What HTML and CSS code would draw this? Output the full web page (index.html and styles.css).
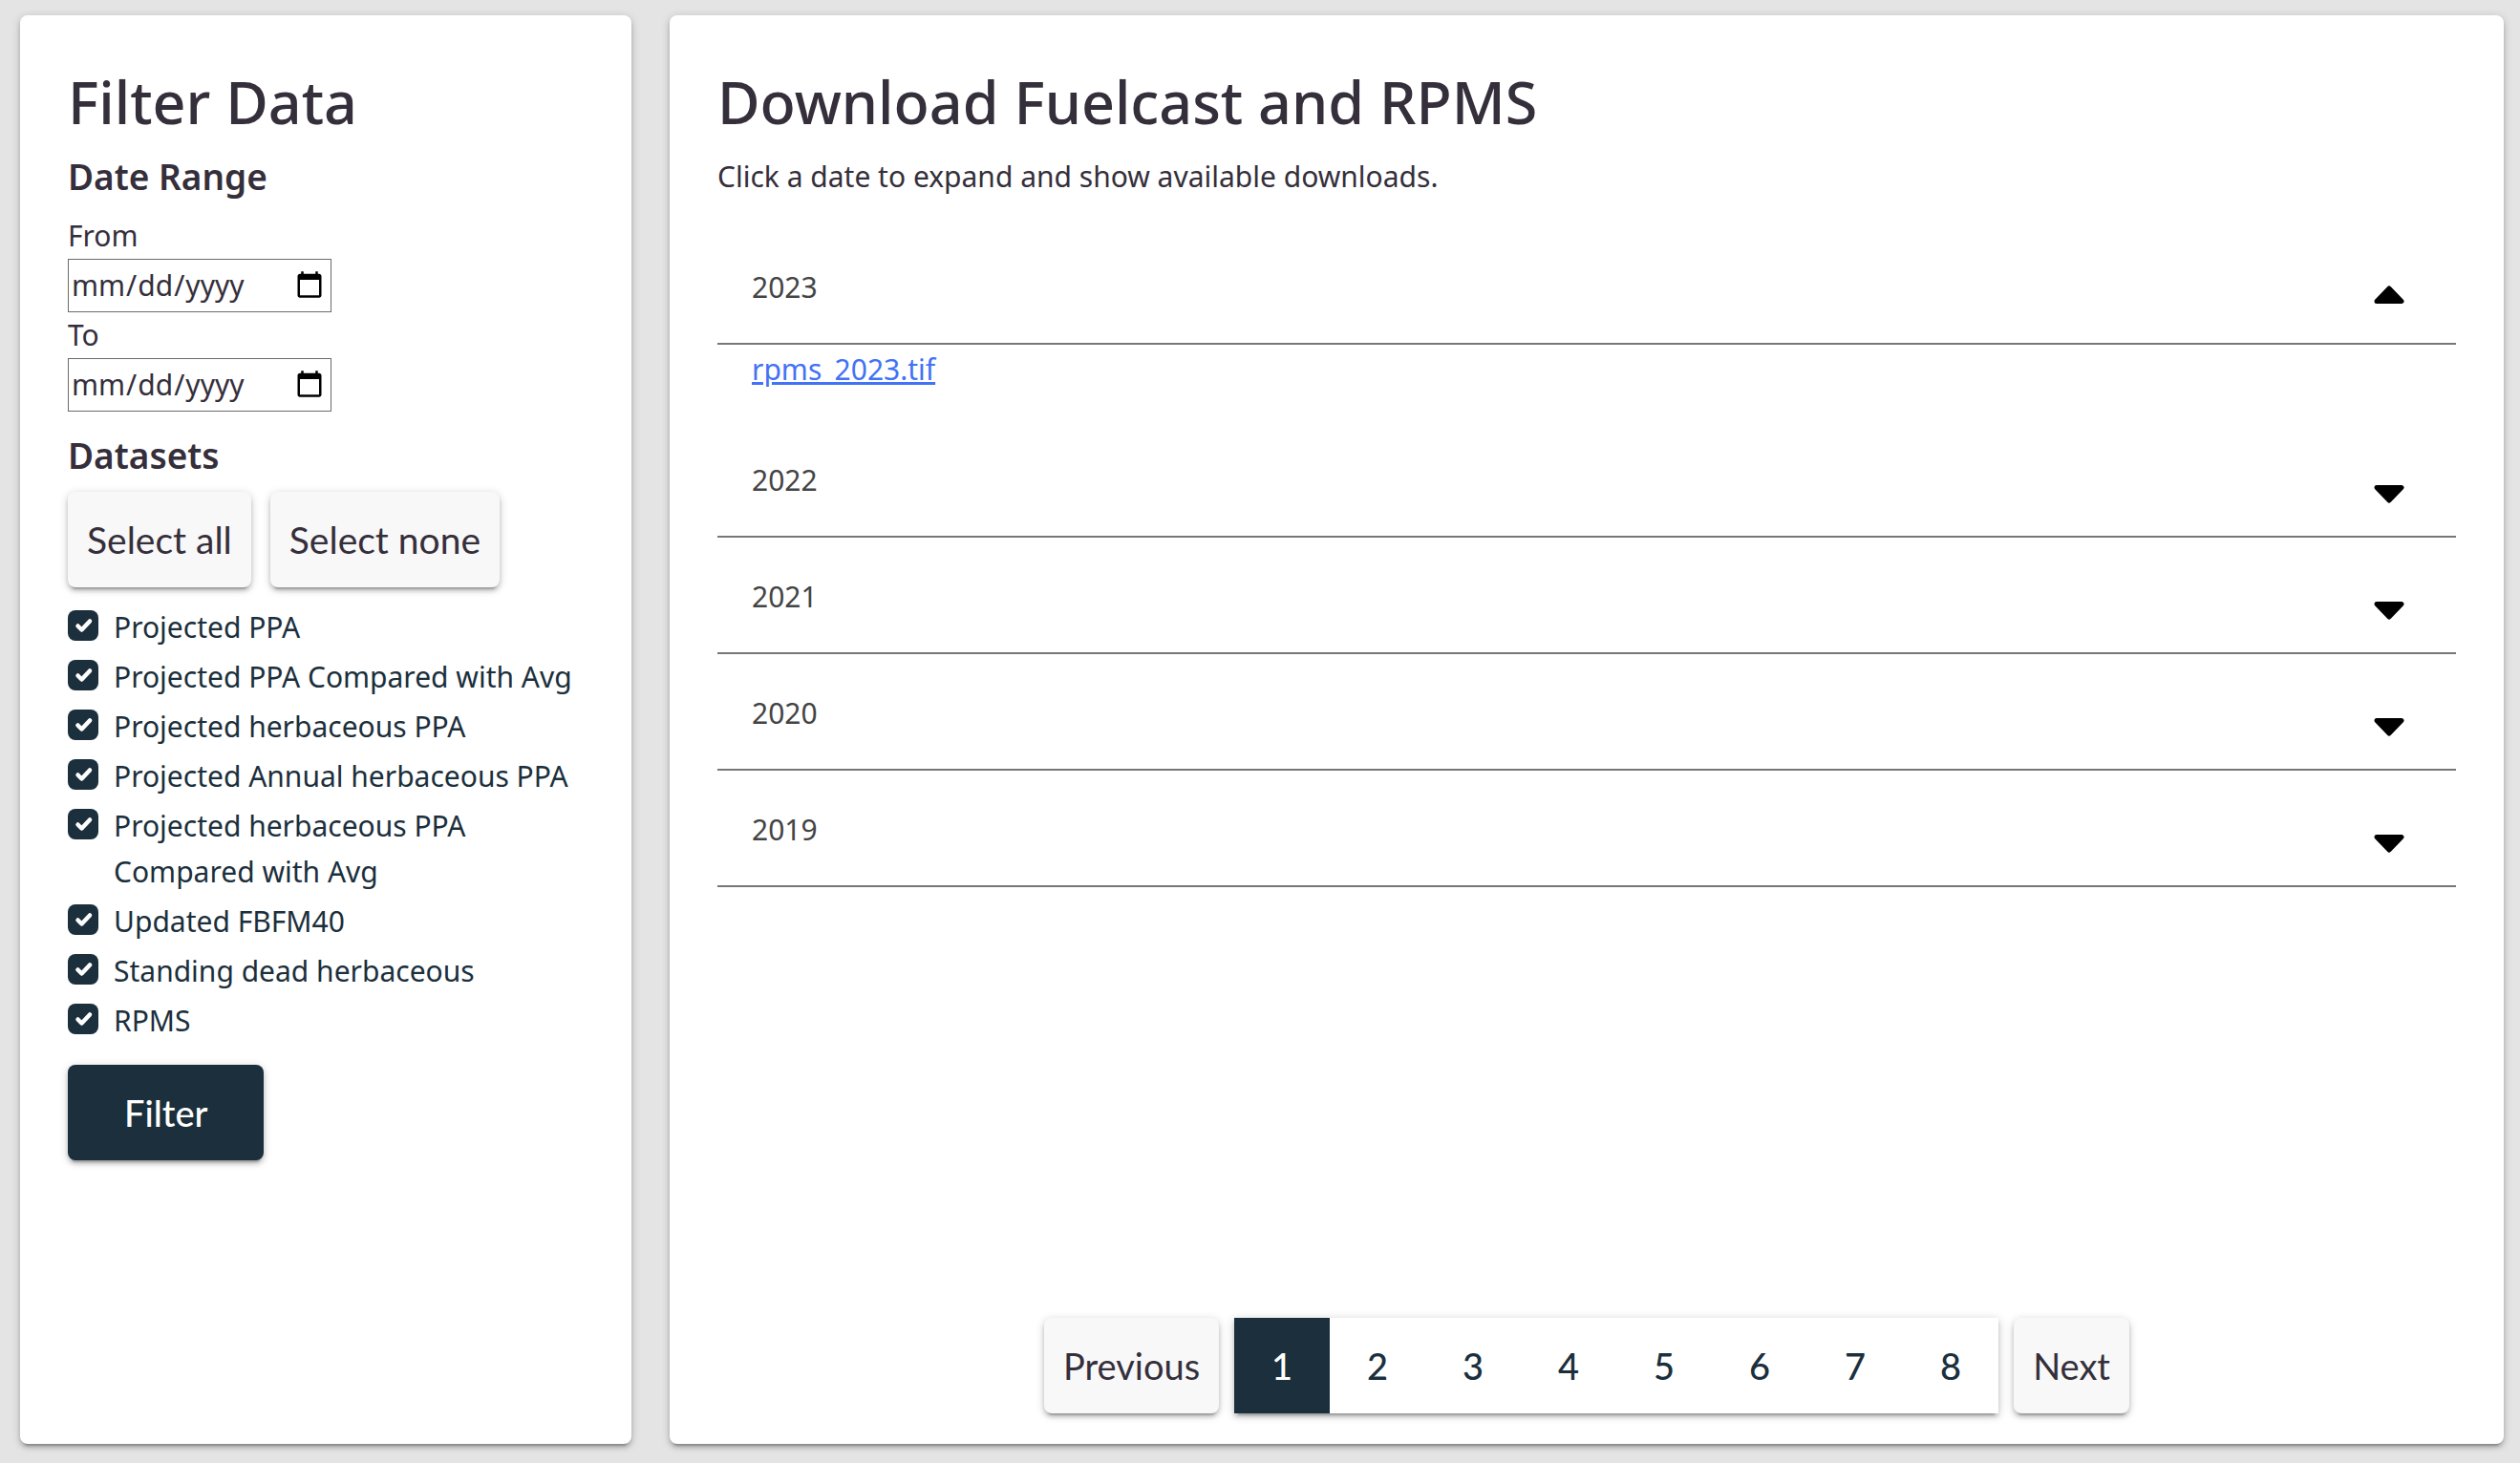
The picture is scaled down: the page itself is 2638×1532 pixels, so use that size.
FILE: index.html
```html
<!DOCTYPE html>
<html lang="en">
<head>
<meta charset="utf-8">
<meta name="viewport" content="width=device-width, initial-scale=1">
<title>Download Fuelcast and RPMS</title>
<link rel="stylesheet" href="styles.css">
</head>
<body>
<div class="layout">
  <aside class="card">
    <form class="filter">
      <h1 class="title">Filter Data</h1>
      <h2 class="subtitle">Date Range</h2>
      <div class="field">
        <label for="date-from">From</label>
        <input class="date" type="date" id="date-from">
      </div>
      <div class="field">
        <label for="date-to">To</label>
        <input class="date" type="date" id="date-to">
      </div>
      <h2 class="subtitle subtitle-datasets">Datasets</h2>
      <div class="select-row">
        <button class="btn" type="button">Select all</button>
        <button class="btn" type="button">Select none</button>
      </div>
      <ul class="datasets">
        <li><label class="option"><input class="tick" type="checkbox" checked><span>Projected PPA</span></label></li>
        <li><label class="option"><input class="tick" type="checkbox" checked><span>Projected PPA Compared with Avg</span></label></li>
        <li><label class="option"><input class="tick" type="checkbox" checked><span>Projected herbaceous PPA</span></label></li>
        <li><label class="option"><input class="tick" type="checkbox" checked><span>Projected Annual herbaceous PPA</span></label></li>
        <li><label class="option"><input class="tick" type="checkbox" checked><span>Projected herbaceous PPA Compared with Avg</span></label></li>
        <li><label class="option"><input class="tick" type="checkbox" checked><span>Updated FBFM40</span></label></li>
        <li><label class="option"><input class="tick" type="checkbox" checked><span>Standing dead herbaceous</span></label></li>
        <li><label class="option"><input class="tick" type="checkbox" checked><span>RPMS</span></label></li>
      </ul>
      <button class="btn btn-primary" type="button">Filter</button>
    </form>
  </aside>
  <main class="card downloads">
    <h1 class="title">Download Fuelcast and RPMS</h1>
    <p class="intro">Click a date to expand and show available downloads.</p>
    <div class="years">
      <button class="year" type="button" aria-expanded="true">2023<svg class="caret caret-up" viewBox="0 0 32 20" aria-hidden="true"><path d="M3 16.500 16 3 29 16.500Z"/></svg></button>
      <div class="files"><a href="#rpms_2023.tif">rpms_2023.tif</a></div>
      <button class="year" type="button" aria-expanded="false">2022<svg class="caret" viewBox="0 0 32 20" aria-hidden="true"><path d="M3 3.500 16 17 29 3.500Z"/></svg></button>
      <button class="year" type="button" aria-expanded="false">2021<svg class="caret" viewBox="0 0 32 20" aria-hidden="true"><path d="M3 3.500 16 17 29 3.500Z"/></svg></button>
      <button class="year" type="button" aria-expanded="false">2020<svg class="caret" viewBox="0 0 32 20" aria-hidden="true"><path d="M3 3.500 16 17 29 3.500Z"/></svg></button>
      <button class="year" type="button" aria-expanded="false">2019<svg class="caret" viewBox="0 0 32 20" aria-hidden="true"><path d="M3 3.500 16 17 29 3.500Z"/></svg></button>
    </div>
    <nav class="pager" aria-label="Pages">
      <button class="btn" type="button">Previous</button>
      <div class="pages">
        <button class="page page-current" type="button" aria-current="page">1</button>
        <button class="page" type="button">2</button>
        <button class="page" type="button">3</button>
        <button class="page" type="button">4</button>
        <button class="page" type="button">5</button>
        <button class="page" type="button">6</button>
        <button class="page" type="button">7</button>
        <button class="page" type="button">8</button>
      </div>
      <button class="btn" type="button">Next</button>
    </nav>
  </main>
</div>
</body>
</html>
```

FILE: styles.css
```css
:root {
  --ink: #352f3b;
  --navy: #1b2f3c;
  --shadow: 0 6px 2px -4px rgba(0, 0, 0, .2), 0 4px 4px 0 rgba(0, 0, 0, .14), 0 2px 10px 0 rgba(0, 0, 0, .2);
  --body-font: "Noto Sans", "Open Sans", sans-serif;
  --button-font: Lato, "Open Sans", sans-serif;
}

* {
  box-sizing: border-box;
}

body {
  margin: 0;
  background: #e4e4e4;
  color: var(--ink);
  font: 30px/48px var(--body-font);
}

h1, h2, p, ul {
  margin: 0;
  padding: 0;
}

ul {
  list-style: none;
}

button {
  border: 0;
  cursor: pointer;
}

.layout {
  display: grid;
  grid-template-columns: minmax(0, 1fr) minmax(0, 3fr);
  gap: 40px;
  min-height: 100vh;
  padding: 16px 17px 20px 21px;
}

.card {
  padding: 51px 50px 32px;
  border-radius: 8px;
  background: #fff;
  box-shadow: var(--shadow);
}

.title {
  font-size: 61px;
  font-weight: 500;
  line-height: 80px;
}

.subtitle {
  font-size: 37px;
  font-weight: 600;
  line-height: 76px;
}

.subtitle-datasets {
  margin-top: 8px;
}

.field {
  display: flex;
  flex-direction: column;
  align-items: flex-start;
}

.date {
  width: 276px;
  height: 56px;
  padding: 0 2px;
  border: 1px solid #6b6b6b;
  background: #fff;
  color: var(--ink);
  font: 30px/48px var(--body-font);
}

.date::-webkit-calendar-picker-indicator {
  width: 32px;
  height: 32px;
  margin-right: 2px;
}

.select-row {
  display: flex;
  gap: 20px;
  margin-bottom: 18px;
}

.btn {
  height: 100px;
  padding: 0 20px;
  border-radius: 8px;
  background: #f8f8f8;
  box-shadow: var(--shadow);
  color: var(--ink);
  font: 38px/48px var(--button-font);
}

.select-row .btn {
  font-size: 39px;
}

.btn-primary {
  padding: 0 59px;
  background: var(--navy);
  color: #fff;
  font-weight: 500;
}

.datasets {
  display: grid;
  gap: 4px;
  margin-bottom: 22px;
  color: var(--navy);
}

.option {
  display: flex;
  align-items: flex-start;
  gap: 16px;
}

.tick {
  flex: none;
  width: 32px;
  height: 32px;
  margin: 6px 0 0;
  border-radius: 8px;
  appearance: none;
  background: #fff;
  box-shadow: inset 0 0 0 2px var(--navy);
}

.tick:checked {
  background: var(--navy) url("data:image/svg+xml,%3Csvg xmlns='http://www.w3.org/2000/svg' viewBox='0 0 32 32'%3E%3Cpath d='M10.500 16.500 14.500 20.500 23 11.500' fill='none' stroke='white' stroke-width='4.500' stroke-linecap='round' stroke-linejoin='round'/%3E%3C/svg%3E");
}

.downloads {
  display: flex;
  flex-direction: column;
}

.intro {
  margin: 14px 0 30px;
}

.years {
  flex: 1;
}

.year {
  display: flex;
  align-items: center;
  justify-content: space-between;
  width: 100%;
  height: 122px;
  padding: 3px 54px 0 36px;
  border-bottom: 2px solid #777;
  background: none;
  color: #444;
  font: 30px/48px var(--body-font);
}

.caret {
  width: 32px;
  height: 20px;
  margin-top: 28px;
  fill: #000;
  stroke: #000;
  stroke-width: 5;
  stroke-linejoin: round;
}

.caret-up {
  margin-top: 16px;
}

.files {
  padding: 2px 36px 30px;
}

.files a {
  color: #4272f5;
}

.pager {
  display: flex;
  justify-content: center;
  gap: 16px;
}

.pages {
  display: flex;
  background: #fff;
  box-shadow: var(--shadow);
}

.page {
  width: 100px;
  height: 100px;
  background: none;
  color: var(--navy);
  font: 500 38px/48px var(--button-font);
}

.page-current {
  background: var(--navy);
  color: #fff;
}
```
